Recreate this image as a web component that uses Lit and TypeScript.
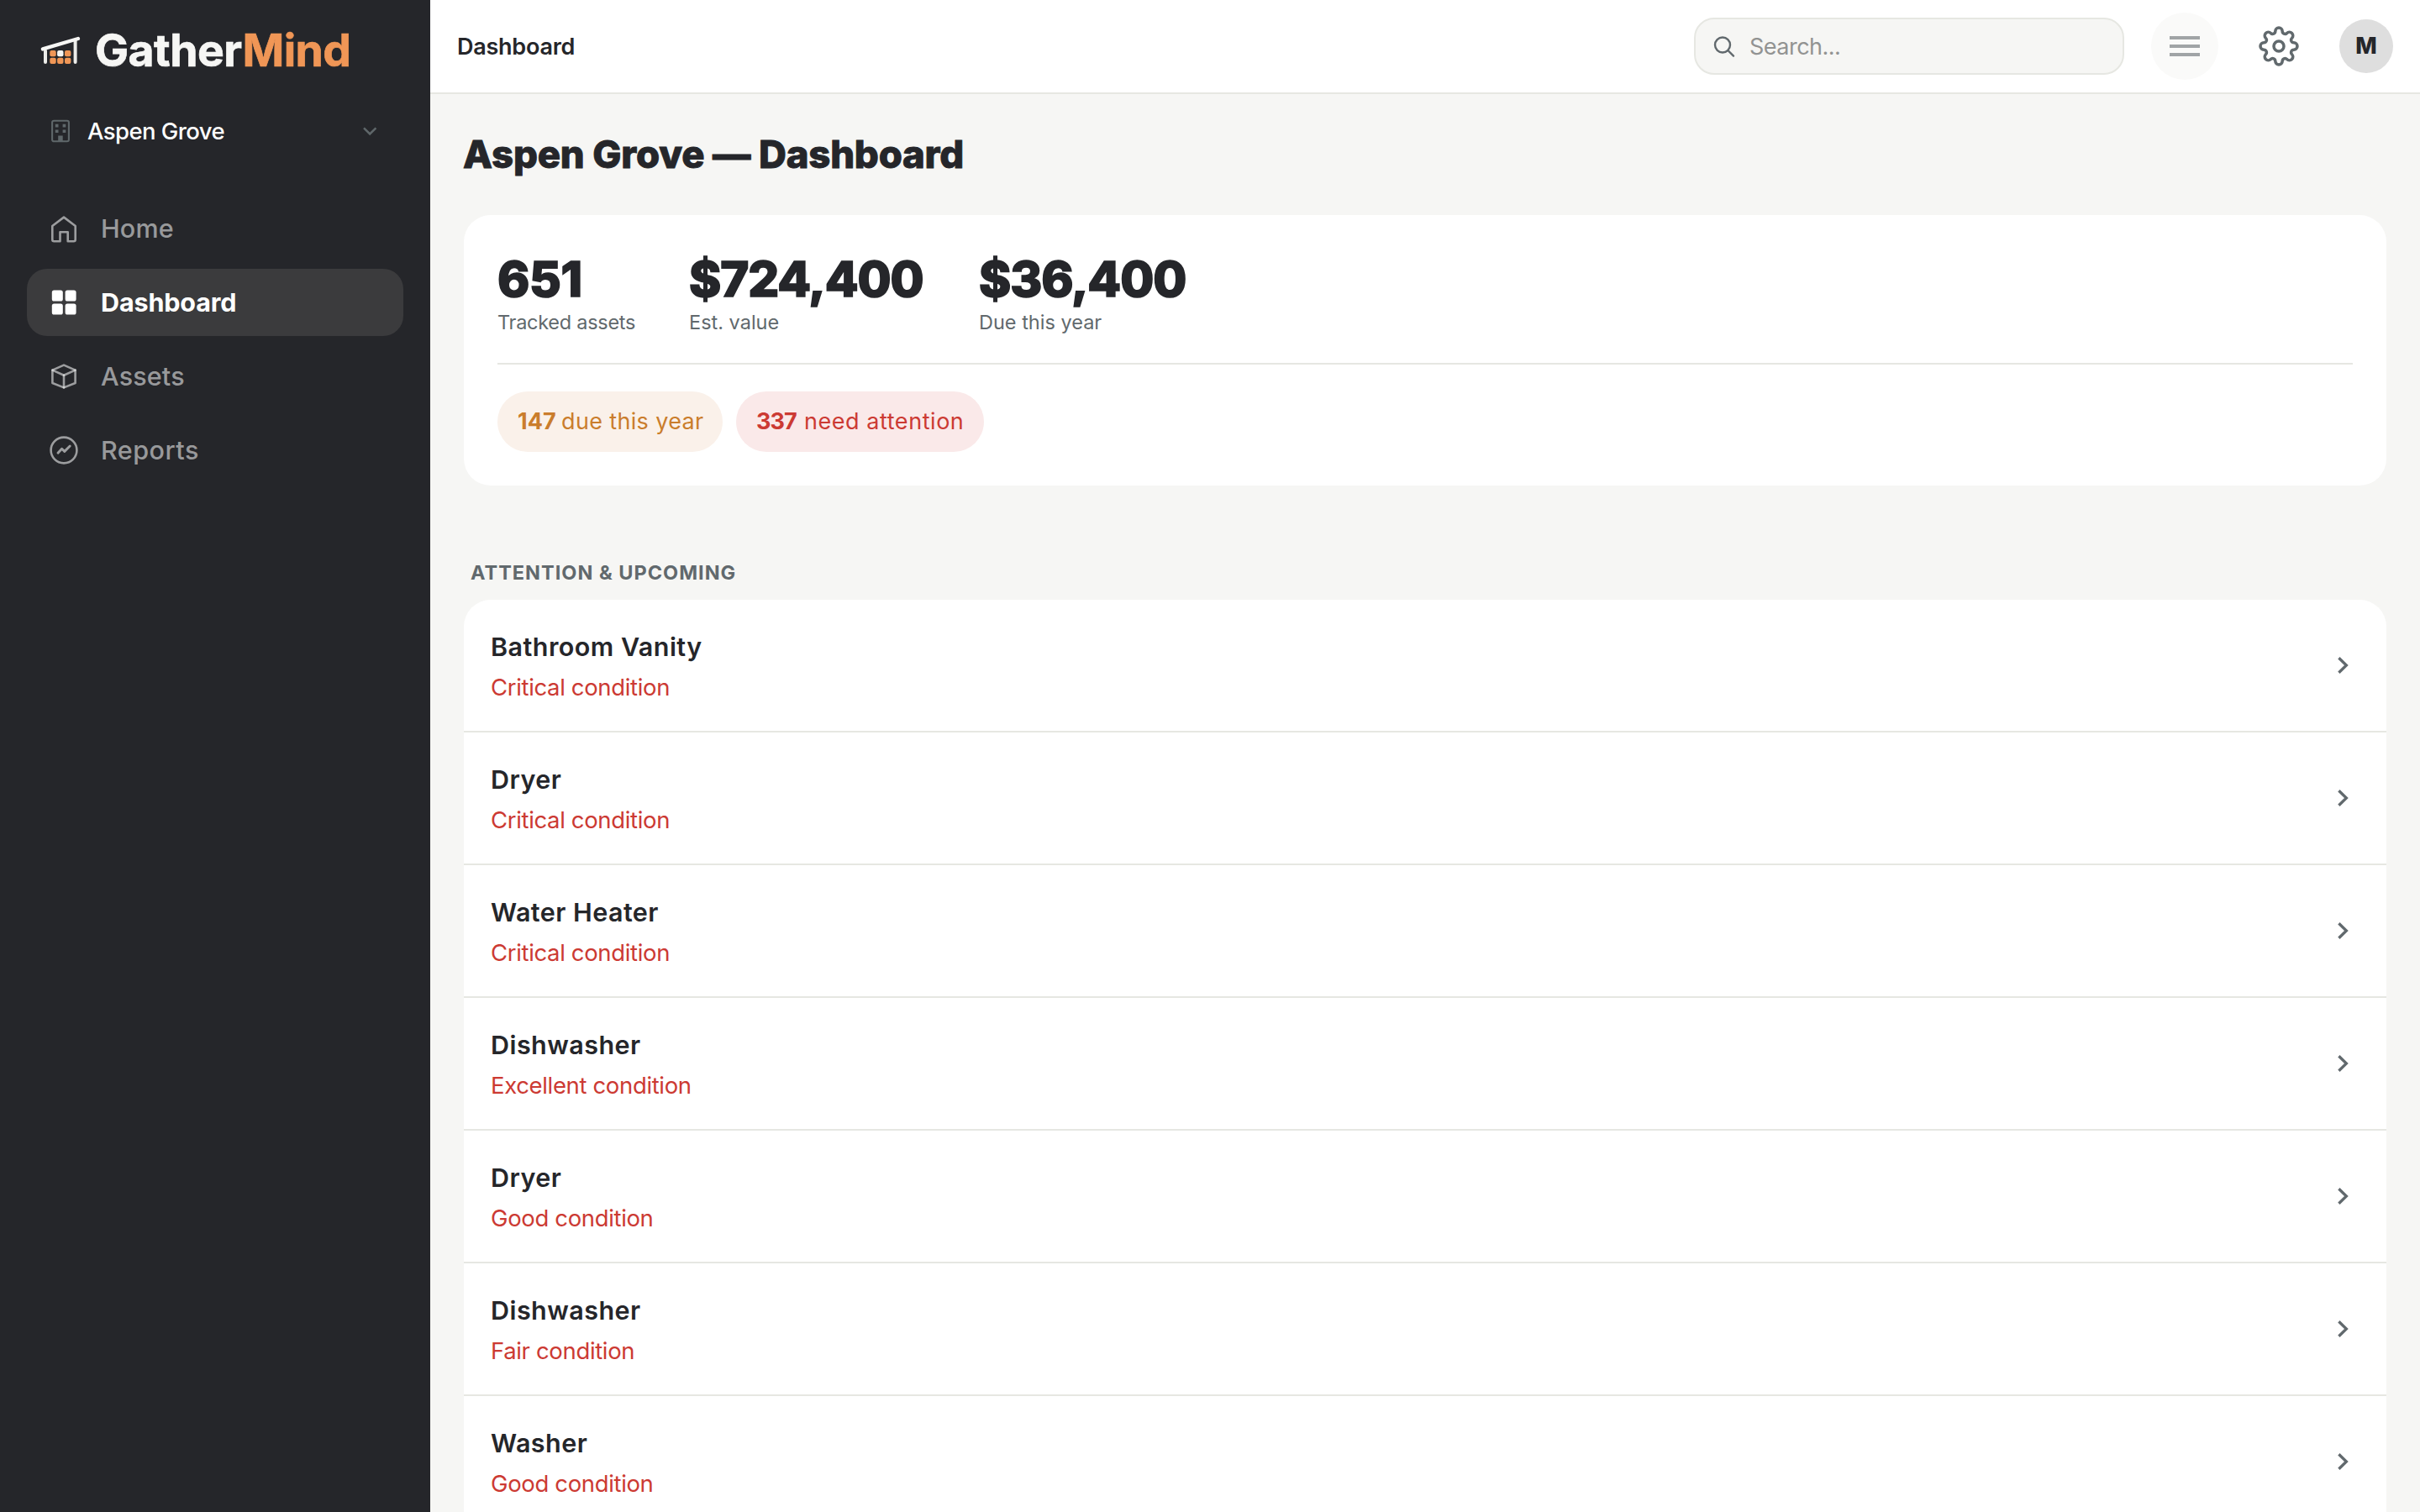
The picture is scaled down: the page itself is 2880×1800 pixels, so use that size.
import { LitElement, html, css, svg } from 'lit';
import { customElement, property } from 'lit/decorators.js';

/** Outline of an eight-lobed gear centred on the origin. */
function gearPath(): string {
  const radius = 17.8;
  const half = 4.2;
  const point = (angle: number, r: number, side: number) => {
    const a = (angle * Math.PI) / 180;
    const x = r * Math.cos(a) - side * Math.sin(a);
    const y = r * Math.sin(a) + side * Math.cos(a);
    return `${x.toFixed(2)} ${y.toFixed(2)}`;
  };
  let d = `M${point(-90, radius, -half)}`;
  for (let i = 0; i < 8; i++) {
    const angle = -90 + i * 45;
    d += `A${half} ${half} 0 0 1 ${point(angle, radius, half)}`;
    d += `A3.17 3.17 0 0 0 ${point(angle + 45, radius, -half)}`;
  }
  return d + 'Z';
}

const icons: Record<string, unknown> = {
  home: svg`<path d="M2.3 13 L16 2.6 L29.7 13 V29.3 a2 2 0 0 1 -2 2 H20.7 V20.3 H11.5 V31.3 H4.3 a2 2 0 0 1 -2 -2 Z"/>`,
  dashboard: svg`<g fill="currentColor" stroke="none">
    <rect x="1.8" y="1.5" width="13" height="13" rx="2.6"/><rect x="17.6" y="1.5" width="13" height="13" rx="2.6"/>
    <rect x="1.8" y="17.6" width="13" height="13" rx="2.6"/><rect x="17.6" y="17.6" width="13" height="13" rx="2.6"/></g>`,
  assets: svg`<path d="M2.4 8.6 L16 2.6 L29.6 8.6 V24 L16 29.4 L2.4 24 Z"/>
    <path d="M2.4 8.6 L16 14.8 L29.6 8.6"/><path d="M16 14.8 V29.4"/>`,
  reports: svg`<circle cx="16" cy="16" r="15.4"/>
    <path d="M9 19.2 L13.6 14.2 L16.8 17.4 L23.2 11" stroke-width="2.9"/>`,
};

@customElement('gm-sidebar')
class GmSidebar extends LitElement {
  static styles = css`
    :host { display: block; width: 512px; height: 1800px; background: #25262a; box-sizing: border-box; }
    .logo { display: flex; align-items: center; height: 60px; padding: 30px 0 0 48px; }
    .logo svg { width: 48px; height: 34px; flex: none; }
    .word { margin-left: 17px; font-size: 53.5px; line-height: 60px; font-weight: 700; letter-spacing: -0.56px; color: #f6f6f4; -webkit-text-stroke: 0.7px currentColor; }
    .word .accent { color: #f09656; }
    .property { display: flex; align-items: center; height: 60px; margin-top: 36px; padding: 0 60px; }
    .property svg { width: 24px; height: 32px; flex: none; }
    .property .name { flex: 1; margin-left: 20px; font-size: 27.5px; font-weight: 500; letter-spacing: -0.58px; color: #fff; }
    .property .chevron { width: 24px; height: 24px; }
    nav { display: flex; flex-direction: column; gap: 8px; padding: 46px 32px 0; }
    .item { display: flex; align-items: center; gap: 28px; height: 80px; padding-left: 28px; border-radius: 24px;
      color: rgba(255, 255, 255, 0.55); font-size: 30.5px; font-weight: 500; letter-spacing: 0.15px; }
    .item span { padding-bottom: 2px; }
    .item.reports { letter-spacing: 0.5px; }
    .item svg { width: 32px; height: 32px; flex: none; overflow: visible; }
    .item.active { background: #3b3b3d; color: #fff; font-weight: 700; letter-spacing: -0.14px; }
  `;
  render() {
    const items = [['home', 'Home'], ['dashboard', 'Dashboard'], ['assets', 'Assets'], ['reports', 'Reports']];
    return html`
      <div class="logo">
        <svg viewBox="0 0 48 34" fill="none" stroke-linecap="round">
          <path d="M6 17.5V31M41.6 5V31" stroke="#ecece9" stroke-width="4"/>
          <path d="M2.9 15.4 45 3" stroke="#f6f6f4" stroke-width="4.4"/>
          <g fill="#f09656"><rect x="11.3" y="17" width="7.4" height="7.3" rx="2"/><rect x="29" y="17" width="7.4" height="7.3" rx="2"/>
          <rect x="11.3" y="25.7" width="7.4" height="7.3" rx="2"/><rect x="20.1" y="25.7" width="7.4" height="7.3" rx="2"/><rect x="29" y="25.7" width="7.4" height="7.3" rx="2"/></g>
          <rect x="20.1" y="17" width="7.4" height="7.3" rx="2" fill="#f6f6f4"/>
        </svg>
        <span class="word">Gather<span class="accent">Mind</span></span>
      </div>
      <div class="property">
        <svg viewBox="0 0 24 32" fill="#5f676a">
          <rect x="2.1" y="3.7" width="19.8" height="24.6" rx="2" fill="none" stroke="#5f676a" stroke-width="2.1"/>
          <path d="M5.8 7.7h3.7v3.7H5.8zM14.6 7.7h3.7v3.7h-3.7zM5.8 14.4h3.7v3.7H5.8zM14.6 14.4h3.7v3.7h-3.7zM9.2 21.4h5.5v7H9.2z"/>
        </svg>
        <span class="name">Aspen Grove</span>
        <svg class="chevron" viewBox="0 0 24 24" fill="none" stroke="#5f676a" stroke-width="2.5"><path d="M5 8.4 12.2 15.4 19.4 8.4"/></svg>
      </div>
      <nav>
        ${items.map(([icon, label]) => html`
          <div class="item ${icon} ${icon === 'dashboard' ? 'active' : ''}">
            <svg viewBox="0 0 32 32" fill="none" stroke="currentColor" stroke-width="2.6" stroke-linecap="round" stroke-linejoin="round">${icons[icon]}</svg>
            <span>${label}</span>
          </div>`)}
      </nav>`;
  }
}

@customElement('gm-topbar')
class GmTopbar extends LitElement {
  static styles = css`
    :host { display: flex; align-items: center; box-sizing: border-box; height: 112px; padding: 0 32px;
      background: #fff; border-bottom: 2px solid #e6e7e2; gap: 32px; }
    .title { flex: 1; font-size: 27px; font-weight: 600; letter-spacing: -0.25px; color: #25262a; }
    .search { display: flex; align-items: center; gap: 17px; box-sizing: border-box; width: 512px; height: 68px;
      padding-left: 20px; border: 2px solid #e6e7e2; border-radius: 24px; background: #f6f6f4; }
    .search svg { width: 27px; height: 27px; }
    .search span { font-size: 27px; letter-spacing: -0.52px; color: #929392; }
    .menu { display: flex; flex-direction: column; align-items: center; justify-content: center; gap: 6px;
      width: 80px; height: 80px; border-radius: 50%; background: #fafaf9; }
    .bar { width: 36px; height: 4px; background: #a0a4a6; }
    .gear { display: flex; width: 80px; height: 80px; align-items: center; justify-content: center; }
    .gear svg { width: 50px; height: 50px; }
    .avatar { width: 64px; height: 64px; border-radius: 50%; background: #dedede; color: #25262a;
      font-size: 27px; font-weight: 800; line-height: 64px; text-align: center; }
  `;
  render() {
    return html`
      <div class="title">Dashboard</div>
      <div class="search">
        <svg viewBox="0 0 27 27" fill="none" stroke="#61696d" stroke-width="2.4" stroke-linecap="round"><circle cx="12" cy="11.5" r="9"/><path d="M18.4 18 25 24.6"/></svg>
        <span>Search...</span>
      </div>
      <div class="menu"><div class="bar"></div><div class="bar"></div><div class="bar"></div></div>
      <div class="gear"><svg viewBox="-25 -25 50 50" fill="none" stroke="#61696d" stroke-width="3.5"><path d=${gearPath()}/><circle r="6"/></svg></div>
      <div class="avatar">M</div>`;
  }
}

@customElement('gm-summary')
class GmSummary extends LitElement {
  static styles = css`
    :host { display: block; box-sizing: border-box; height: 322px; padding: 40px; background: #fff; border-radius: 32px; }
    .stats { display: grid; grid-template-columns: 228px 345px auto; padding-bottom: 32px; border-bottom: 2px solid #e6e7e2; }
    .value { font-size: 58px; line-height: 72px; font-weight: 800; letter-spacing: -1.05px; color: #25262a; -webkit-text-stroke: 1.6px currentColor; }
    .value.short { letter-spacing: -0.4px; }
    .label { font-size: 23.5px; line-height: 32px; letter-spacing: 0; color: #61696d; }
    .label.tight { letter-spacing: -0.27px; }
    .pills { display: flex; gap: 16px; padding-top: 32px; }
    .pill { display: flex; box-sizing: border-box; height: 72px; border-radius: 36px; line-height: 72px; font-size: 27px; white-space: nowrap; }
    .due { width: 268px; padding-left: 24px; background: #faf1ea; color: #ca7d2c; letter-spacing: 0.35px; }
    .alert { width: 295px; padding-left: 24px; background: #fae9e9; color: #cc3a33; letter-spacing: 0.55px; }
    .due b { width: 52px; letter-spacing: 0; }
    .alert b { width: 57px; letter-spacing: -0.9px; }
  `;
  render() {
    return html`
      <div class="stats">
        <div><div class="value short">651</div><div class="label tight">Tracked assets</div></div>
        <div><div class="value">$724,400</div><div class="label">Est. value</div></div>
        <div><div class="value">$36,400</div><div class="label">Due this year</div></div>
      </div>
      <div class="pills">
        <div class="pill due"><b>147</b><span>due this year</span></div>
        <div class="pill alert"><b>337</b><span>need attention</span></div>
      </div>`;
  }
}

@customElement('gm-asset-row')
class GmAssetRow extends LitElement {
  @property() name = '';
  @property() condition = '';
  static styles = css`
    :host { display: flex; align-items: center; justify-content: space-between; box-sizing: border-box; height: 158px;
      padding: 4px 40px 0 32px; border-bottom: 2px solid #e6e7e2; }
    .name { font-size: 30.5px; line-height: 48px; font-weight: 600; letter-spacing: 0.45px; color: #25262a; }
    .condition { font-size: 27.5px; line-height: 48px; letter-spacing: -0.35px; color: #cc3a33; }
    svg { width: 24px; height: 24px; margin-bottom: 4px; }
  `;
  render() {
    return html`
      <div><div class="name">${this.name}</div><div class="condition">${this.condition}</div></div>
      <svg viewBox="0 0 24 24" fill="none" stroke="#61696d" stroke-width="3.3"><path d="M7.4 3.2 16.4 12 7.4 20.8"/></svg>`;
  }
}

@customElement('app-root')
class AppRoot extends LitElement {
  static styles = css`
    :host { display: flex; width: 2880px; height: 1800px; overflow: hidden; background: #f6f6f4;
      font-family: Inter, "Liberation Sans", sans-serif; }
    gm-sidebar { flex: none; }
    .page { flex: 1; min-width: 0; }
    main { padding: 40px 40px 0; }
    h1 { margin: 0 0 41px -1px; font-size: 45.5px; line-height: 63px; font-weight: 800; letter-spacing: -0.21px; color: #25262a; -webkit-text-stroke: 0.9px currentColor; }
    h2 { margin: 86px 0 15px 8px; font-size: 23.5px; line-height: 35px; font-weight: 700; letter-spacing: 1px; color: #61696d; }
    .list { background: #fff; border-radius: 32px; overflow: hidden; }
  `;
  render() {
    const rows = [
      ['Bathroom Vanity', 'Critical condition'],
      ['Dryer', 'Critical condition'],
      ['Water Heater', 'Critical condition'],
      ['Dishwasher', 'Excellent condition'],
      ['Dryer', 'Good condition'],
      ['Dishwasher', 'Fair condition'],
      ['Washer', 'Good condition'],
      ['', ''],
    ];
    return html`
      <gm-sidebar></gm-sidebar>
      <div class="page">
        <gm-topbar></gm-topbar>
        <main>
          <h1>Aspen Grove — Dashboard</h1>
          <gm-summary></gm-summary>
          <h2>ATTENTION &amp; UPCOMING</h2>
          <div class="list">
            ${rows.map(([name, condition]) => html`<gm-asset-row .name=${name} .condition=${condition}></gm-asset-row>`)}
          </div>
        </main>
      </div>`;
  }
}
